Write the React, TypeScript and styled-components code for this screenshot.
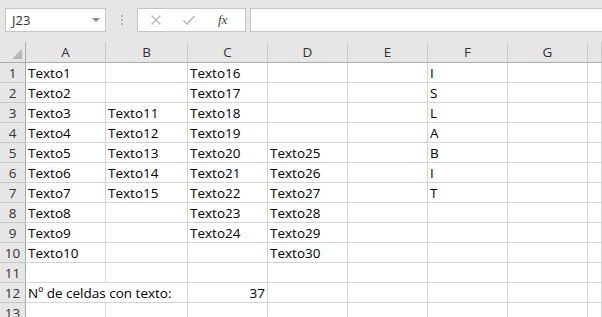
import styled, { createGlobalStyle } from "styled-components";

const GlobalStyle = createGlobalStyle`
  html, body {
    margin: 0;
    padding: 0;
    background: #ffffff;
    overflow: hidden;
  }
  body {
    font-family: "Open Sans", "Liberation Sans", Arial, sans-serif;
  }
`;

const Page = styled.div`
  width: 602px;
  height: 317px;
  display: flex;
  flex-direction: column;
  background: #ffffff;
  overflow: hidden;
`;

const Toolbar = styled.div`
  height: 42px;
  flex: none;
  box-sizing: border-box;
  padding: 8px 0 0 5px;
  display: flex;
  align-items: flex-start;
  background: #e6e6e6;
`;

const NameBox = styled.div`
  width: 101px;
  height: 24px;
  box-sizing: border-box;
  border: 1px solid #c6c6c6;
  background: #ffffff;
  display: flex;
  align-items: center;
  justify-content: space-between;
  padding: 0 5px 0 6px;
  font-size: 13px;
  color: #333333;
`;

const Caret = styled.span`
  width: 0;
  height: 0;
  border-left: 4px solid transparent;
  border-right: 4px solid transparent;
  border-top: 4px solid #8a8a8a;
`;

const Grip = styled.div`
  width: 31px;
  height: 24px;
  display: flex;
  flex-direction: column;
  align-items: center;
  justify-content: center;
  gap: 2px;

  span {
    width: 2px;
    height: 2px;
    background: #b3b3b3;
  }
`;

const FormulaButtons = styled.div`
  width: 109px;
  height: 24px;
  box-sizing: border-box;
  border: 1px solid #c6c6c6;
  background: #ffffff;
  display: flex;
  align-items: center;
  padding: 0 0 0 12px;
  gap: 20px;
`;

const Fx = styled.span`
  font-family: "Liberation Serif", "Times New Roman", serif;
  font-style: italic;
  font-size: 13px;
  color: #444444;
  margin-left: 2px;
`;

const FormulaInput = styled.div`
  flex: 1;
  height: 24px;
  margin-left: 4px;
  box-sizing: border-box;
  border: 1px solid #c6c6c6;
  border-right: none;
  background: #ffffff;
`;

const Sheet = styled.div`
  display: grid;
  grid-template-columns: 26px 80px 82px 80px 80px 80px 80px 80px 1fr;
  grid-auto-rows: 20px;
  grid-template-rows: 21px;
`;

const Corner = styled.div`
  background: #e6e6e6;
  border-right: 1px solid #ababab;
  border-bottom: 1px solid #ababab;
  box-sizing: border-box;
  position: relative;

  &::after {
    content: "";
    position: absolute;
    right: 3px;
    bottom: 3px;
    width: 0;
    height: 0;
    border-left: 10px solid transparent;
    border-bottom: 10px solid #b7b7b7;
  }
`;

const ColHead = styled.div`
  background: #e6e6e6;
  border-right: 1px solid #c8c8c8;
  border-bottom: 1px solid #ababab;
  box-sizing: border-box;
  display: flex;
  align-items: center;
  justify-content: center;
  font-size: 13.5px;
  color: #333333;
`;

const RowHead = styled.div`
  background: #e6e6e6;
  border-right: 1px solid #ababab;
  border-bottom: 1px solid #c8c8c8;
  box-sizing: border-box;
  display: flex;
  align-items: center;
  justify-content: center;
  font-size: 13.5px;
  color: #333333;
`;

const Cell = styled.div<{ $right?: boolean; $span?: number }>`
  grid-column: ${(p) => (p.$span ? `span ${p.$span}` : "auto")};
  border-right: 1px solid #d4d4d4;
  border-bottom: 1px solid #d4d4d4;
  box-sizing: border-box;
  display: flex;
  align-items: center;
  justify-content: ${(p) => (p.$right ? "flex-end" : "flex-start")};
  padding: 0 2px 0 2px;
  font-size: 13.5px;
  color: #000000;
  white-space: nowrap;
  overflow: visible;
`;

const columns = ["A", "B", "C", "D", "E", "F", "G", ""];

const data: string[][] = [
  ["Texto1", "", "Texto16", "", "", "I", "", ""],
  ["Texto2", "", "Texto17", "", "", "S", "", ""],
  ["Texto3", "Texto11", "Texto18", "", "", "L", "", ""],
  ["Texto4", "Texto12", "Texto19", "", "", "A", "", ""],
  ["Texto5", "Texto13", "Texto20", "Texto25", "", "B", "", ""],
  ["Texto6", "Texto14", "Texto21", "Texto26", "", "I", "", ""],
  ["Texto7", "Texto15", "Texto22", "Texto27", "", "T", "", ""],
  ["Texto8", "", "Texto23", "Texto28", "", "", "", ""],
  ["Texto9", "", "Texto24", "Texto29", "", "", "", ""],
  ["Texto10", "", "", "Texto30", "", "", "", ""],
  ["", "", "", "", "", "", "", ""],
];

const App = () => {
  return (
    <Page>
      <GlobalStyle />
      <Toolbar>
        <NameBox>
          J23
          <Caret />
        </NameBox>
        <Grip>
          <span />
          <span />
          <span />
        </Grip>
        <FormulaButtons>
          <svg width="12" height="12" viewBox="0 0 12 12">
            <path d="M1.5 1.5 L10.5 10.5 M10.5 1.5 L1.5 10.5" stroke="#b4b4b4" strokeWidth="1.3" fill="none" />
          </svg>
          <svg width="14" height="12" viewBox="0 0 14 12">
            <path d="M1.5 6.5 L5 10 L12.5 2" stroke="#b4b4b4" strokeWidth="1.4" fill="none" />
          </svg>
          <Fx>fx</Fx>
        </FormulaButtons>
        <FormulaInput />
      </Toolbar>
      <Sheet>
        <Corner />
        {columns.map((c, i) => (
          <ColHead key={`h-${i}`}>{c}</ColHead>
        ))}
        {data.map((row, r) => [
          <RowHead key={`r-${r}`}>{r + 1}</RowHead>,
          ...row.map((v, c) => <Cell key={`c-${r}-${c}`}>{v}</Cell>),
        ])}
        <RowHead>12</RowHead>
        <Cell $span={2}>Nº de celdas con texto:</Cell>
        <Cell $right>37</Cell>
        <Cell />
        <Cell />
        <Cell />
        <Cell />
        <Cell />
        <RowHead>13</RowHead>
        {columns.map((_, i) => (
          <Cell key={`e-${i}`} />
        ))}
      </Sheet>
    </Page>
  );
};

export default App;
